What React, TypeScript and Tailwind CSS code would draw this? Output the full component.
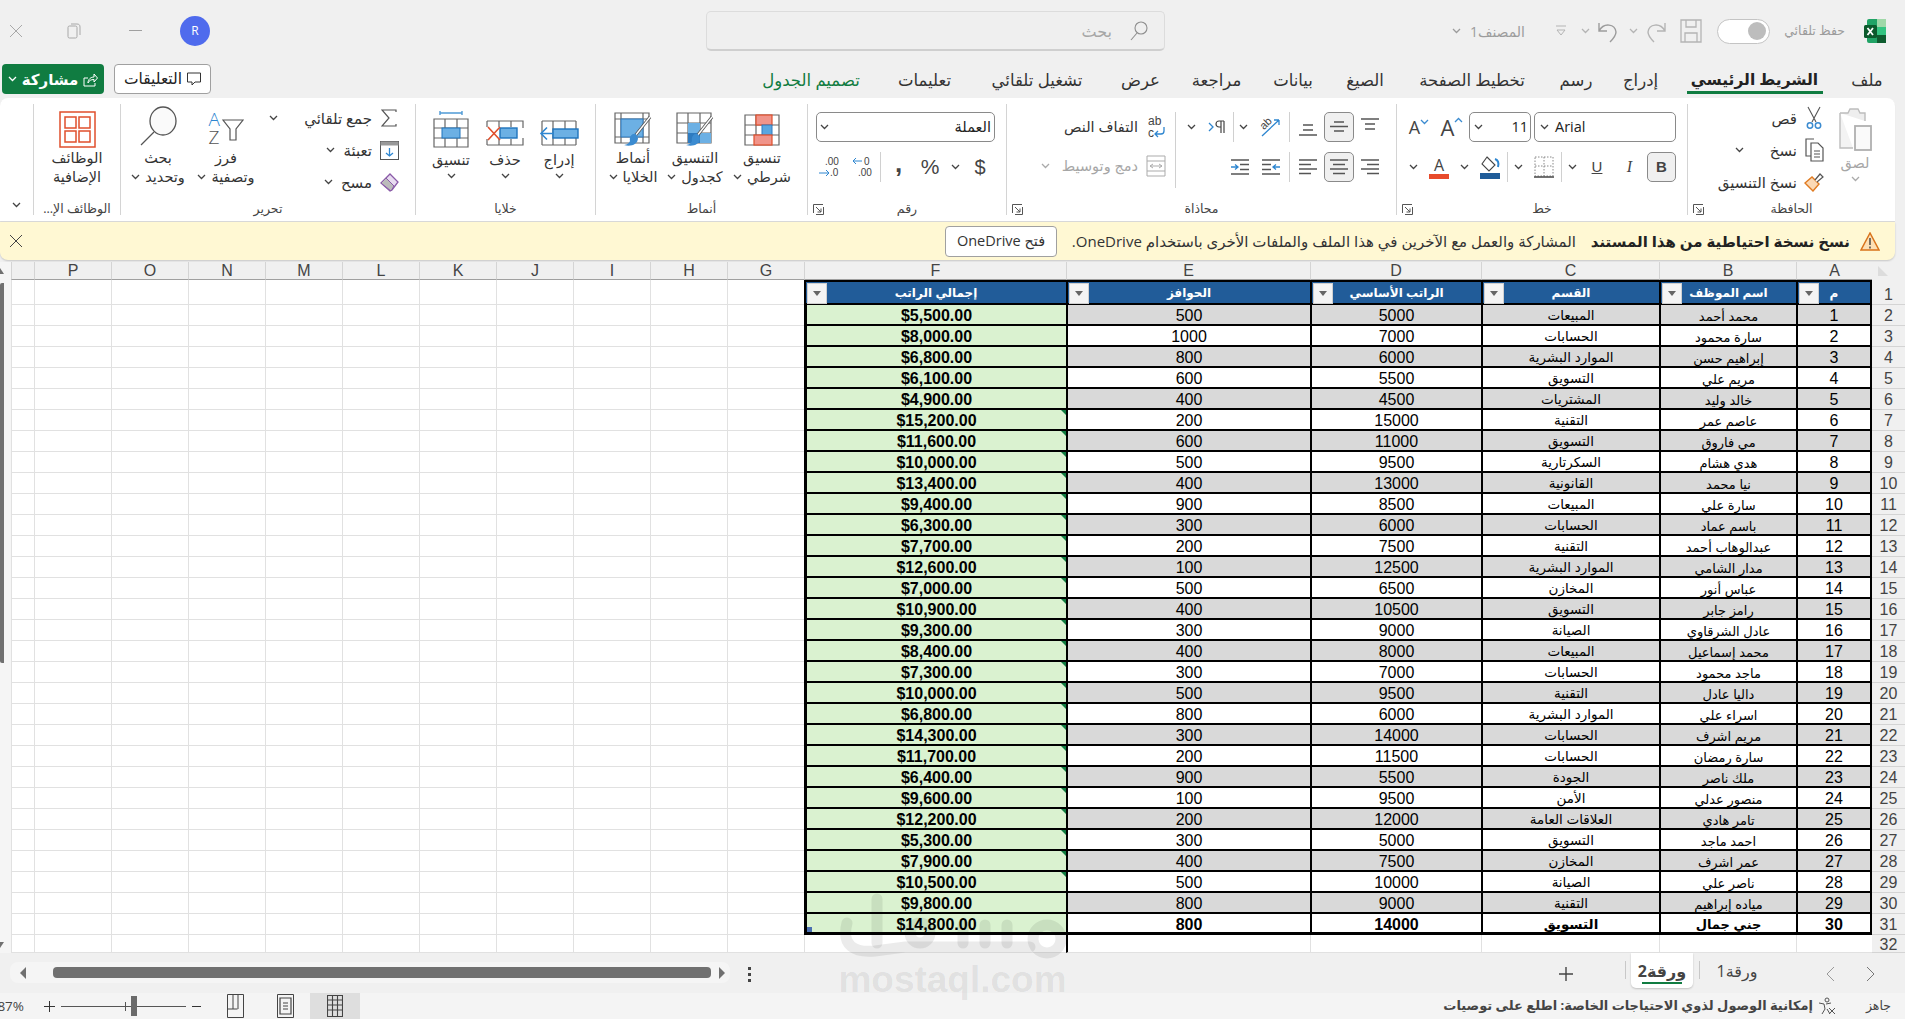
import type { ReactNode } from "react";

const GREEN = "#107C41";

// employee rows: name, department, base salary, bonus
const employees: [string, string, number, number][] = [
  ["محمد أحمد", "المبيعات", 5000, 500],
  ["سارة محمود", "الحسابات", 7000, 1000],
  ["إبراهيم حسن", "الموارد البشرية", 6000, 800],
  ["مريم علي", "التسويق", 5500, 600],
  ["خالد وليد", "المشتريات", 4500, 400],
  ["عاصم عمر", "التقنية", 15000, 200],
  ["مي فاروق", "التسويق", 11000, 600],
  ["هدي هشام", "السكرتارية", 9500, 500],
  ["نيا محمد", "القانونية", 13000, 400],
  ["سارة علي", "المبيعات", 8500, 900],
  ["باسم عماد", "الحسابات", 6000, 300],
  ["عبدالوهاب أحمد", "التقنية", 7500, 200],
  ["مدار الشامي", "الموارد البشرية", 12500, 100],
  ["عباس أنور", "المخازن", 6500, 500],
  ["رامز جابر", "التسويق", 10500, 400],
  ["عادل الشرقاوي", "الصيانة", 9000, 300],
  ["محمد إسماعيل", "المبيعات", 8000, 400],
  ["ماجد محمود", "الحسابات", 7000, 300],
  ["داليا عادل", "التقنية", 9500, 500],
  ["اسراء علي", "الموارد البشرية", 6000, 800],
  ["مريم اشرف", "الحسابات", 14000, 300],
  ["سارة رمضان", "الحسابات", 11500, 200],
  ["ملك ناصر", "الجودة", 5500, 900],
  ["منصور عدلي", "الأمن", 9500, 100],
  ["تامر هادي", "العلاقات العامة", 12000, 200],
  ["احمد ماجد", "التسويق", 5000, 300],
  ["عمر اشرف", "المخازن", 7500, 400],
  ["ناصر علي", "الصيانة", 10000, 500],
  ["مياده إبراهيم", "التقنية", 9000, 800],
  ["جني جمال", "التسويق", 14000, 800],
];

const tabs: [string, string][] = [
  ["ملف", "w-[60px]"],
  ["الشريط الرئيسي", "w-[165px]"],
  ["إدراج", "w-[63px]"],
  ["رسم", "w-[66px]"],
  ["تخطيط الصفحة", "w-[142px]"],
  ["الصيغ", "w-[72px]"],
  ["بيانات", "w-[72px]"],
  ["مراجعة", "w-[81px]"],
  ["عرض", "w-[71px]"],
  ["تشغيل تلقائي", "w-[136px]"],
  ["تعليمات", "w-[89px]"],
  ["تصميم الجدول", "w-[138px]"],
];

const emptyCols = ["G", "H", "I", "J", "K", "L", "M", "N", "O", "P", ""];

function Chev({ color = "#444", up = false }: { color?: string; up?: boolean }) {
  return (
    <svg width="9" height="6" viewBox="0 0 9 6" fill="none" className="shrink-0">
      <path d={up ? "M1 5l3.5-3.5L8 5" : "M1 1l3.5 3.5L8 1"} stroke={color} strokeWidth="1.3" />
    </svg>
  );
}

// fixed-width holder for ribbon glyphs, so they sit on the ribbon's own columns
function Slot({ className = "", children }: { className?: string; children?: ReactNode }) {
  return <div className={`flex items-center justify-center shrink-0 h-[30px] ${className}`}>{children}</div>;
}

function Sep({ className = "h-[30px]" }: { className?: string }) {
  return <div className={`w-[3px] shrink-0 flex justify-center ${className}`}><div className="w-px h-full bg-[#d0d0d0]" /></div>;
}

function Launcher() {
  return (
    <svg width="11" height="11" viewBox="0 0 11 11" fill="none" className="absolute left-[5px] top-[6px]" stroke="#555">
      <path d="M.5 9V.5H10M10.5 3v7.5H3" />
      <path d="M3 3l5 5M8 4.5V8H4.5" />
    </svg>
  );
}

function Group({
  width,
  label,
  launcher = false,
  children,
}: {
  width: string;
  label: string;
  launcher?: boolean;
  children: ReactNode;
}) {
  return (
    <div className={`${width} shrink-0 mt-[6px] h-[111px] border-e border-[#d4d4d4] flex flex-col`}>
      <div className="h-[94px] flex">{children}</div>
      <div className="relative h-[17px] leading-[22px] text-[12.5px] text-center text-[#444]">
        {label}
        {launcher && <Launcher />}
      </div>
    </div>
  );
}

function BigButton({
  width,
  icon,
  lines,
  chevInline = true,
}: {
  width: string;
  icon: ReactNode;
  lines: string[];
  chevInline?: boolean;
}) {
  return (
    <div className={`${width} shrink-0 flex flex-col items-center pt-[7px]`}>
      <div className="h-[37px] flex items-center justify-center">{icon}</div>
      {lines.map((l, i) => (
        <div key={l} className="h-[19px] leading-[19px] text-[14.5px] text-[#333] whitespace-nowrap flex items-center gap-[5px]">
          {l}
          {chevInline && i === lines.length - 1 && <Chev />}
        </div>
      ))}
    </div>
  );
}

function SmallRow({ icon, text, gray = false }: { icon: ReactNode; text: string; gray?: boolean }) {
  return (
    <div className={`flex items-center h-[32px] text-[15px] whitespace-nowrap ${gray ? "text-[#a6a6a6]" : "text-[#333]"}`}>
      <div className="w-[20px] flex justify-center shrink-0">{icon}</div>
      <span className="ms-[7px]">{text}</span>
    </div>
  );
}

// ---- icons ----

function ExcelLogo() {
  return (
    <svg width="24" height="26" viewBox="0 0 24 26">
      <rect x="4" y="1" width="19" height="24" rx="2" fill="#21a366" />
      <rect x="14" y="1" width="9" height="8" fill="#9fd8a8" />
      <rect x="4" y="9" width="10" height="8" fill="#107c41" />
      <rect x="14" y="9" width="9" height="8" fill="#33c481" />
      <rect x="14" y="17" width="9" height="8" fill="#0e5c2f" />
      <rect x="1" y="7" width="13" height="13" rx="1.5" fill="#0b5a2c" />
      <path d="M4.5 10l5.5 7M10 10l-5.5 7" stroke="#fff" strokeWidth="1.8" />
    </svg>
  );
}

function PasteIcon() {
  return (
    <svg width="36" height="46" viewBox="0 0 36 46" fill="none" stroke="#bdbdbd" strokeWidth="1.4">
      <path d="M3 6h8l2-4h8l2 4h5v8" fill="#eee" />
      <path d="M3 6v35h13" fill="#f3f3f3" />
      <rect x="18" y="19" width="16" height="24" fill="#fafafa" stroke="#b0b0b0" strokeWidth="1.8" />
    </svg>
  );
}

function ScissorsIcon() {
  return (
    <svg width="16" height="24" viewBox="0 0 16 24" fill="none" stroke="#555" strokeWidth="1.1">
      <path d="M2 1l8 15M14 1L6 16" />
      <circle cx="4" cy="19.5" r="2.7" stroke="#3b8bd0" strokeWidth="1.5" />
      <circle cx="12" cy="19.5" r="2.7" stroke="#3b8bd0" strokeWidth="1.5" />
    </svg>
  );
}

function CopyIcon() {
  return (
    <svg width="20" height="24" viewBox="0 0 20 24" fill="none" stroke="#555" strokeWidth="1.2">
      <path d="M10 1H2v17h5" />
      <path d="M7 5h7l5 5v13H7z" fill="#fff" />
      <path d="M10 13h6M10 16h6M10 19h6" />
    </svg>
  );
}

function BrushIcon() {
  return (
    <svg width="20" height="20" viewBox="0 0 20 20" fill="none">
      <path d="M1 11l7-6 7 7-6 7z" fill="#fbd9b5" stroke="#e07b22" strokeWidth="1.4" />
      <path d="M11 8l5-6 3 3-6 5" fill="#fff" stroke="#555" strokeWidth="1.2" />
    </svg>
  );
}

function FontA({ big, chev }: { big: boolean; chev: "up" | "down" }) {
  return (
    <div className="flex items-start" dir="ltr">
      <span className={`font-['Open_Sans',sans-serif] text-[#444] leading-none ${big ? "text-[22px]" : "text-[18px]"}`}>A</span>
      <span className="mt-[1px]"><Chev color="#3b8bd0" up={chev === "up"} /></span>
    </div>
  );
}

function AlignLines({ kind }: { kind: "right" | "center" | "left" | "top" | "middle" | "bottom" }) {
  const props = { stroke: "#555", strokeWidth: 1.3 };
  const sets: Record<string, string> = {
    right: "M0 3h18M6 7.5h12M0 12h18M6 16.5h12",
    center: "M0 3h18M3 7.5h12M0 12h18M3 16.5h12",
    left: "M0 3h18M0 7.5h12M0 12h18M0 16.5h12",
    top: "M0 2h18M4 7h10M4 12h10",
    middle: "M0 9.5h18M4 5h10M4 14h10",
    bottom: "M0 18h18M4 8h10M4 13h10",
  };
  return (
    <svg width="18" height="20" viewBox="0 0 18 20" fill="none">
      <path d={sets[kind]} {...props} />
    </svg>
  );
}

function Indent({ flip = false }: { flip?: boolean }) {
  return (
    <svg width="18" height="20" viewBox="0 0 18 20" fill="none" className={flip ? "-scale-x-100" : ""}>
      <path d="M0 3h18M0 17h18M9 7.5h9M9 12.5h9" stroke="#555" strokeWidth="1.3" />
      <path d="M0 10h6M4 7.5L7 10l-3 2.5" stroke="#2e86d0" strokeWidth="1.3" />
    </svg>
  );
}

function FilterArrow() {
  return (
    <div className="absolute left-[1px] top-[1px] w-[20px] h-[21px] bg-[#f4f4f4] border border-[#d0d0d0] flex items-center justify-center">
      <div className="w-0 h-0 border-x-[4px] border-x-transparent border-t-[5px] border-t-[#666]" />
    </div>
  );
}

function CondFormatIcon() {
  return (
    <svg width="36" height="32" viewBox="0 0 36 32" fill="none">
      <path d="M1 1h34v30H1zM1 11h34M1 21h34M12 1v30M24 1v30" stroke="#666" strokeWidth="1.2" />
      <rect x="12" y="1" width="16" height="10" fill="#f0948a" stroke="#e04f2c" strokeWidth="1.2" />
      <rect x="18" y="11" width="10" height="10" fill="#5aa6e0" stroke="#2e7bc0" />
      <rect x="10" y="21" width="18" height="10" fill="#f0948a" stroke="#e04f2c" strokeWidth="1.2" />
    </svg>
  );
}

function TableFormatIcon() {
  return (
    <svg width="38" height="36" viewBox="0 0 38 36" fill="none">
      <path d="M1 1h34v30H1zM1 11h34M1 21h34M12 1v30M24 1v30" stroke="#666" strokeWidth="1.2" />
      <rect x="12" y="11" width="12" height="10" fill="#6cb0e4" />
      <rect x="24" y="21" width="11" height="10" fill="#6cb0e4" />
      <rect x="12" y="21" width="12" height="10" fill="#2e7bc0" />
      <path d="M36 5L21 24" stroke="#555" strokeWidth="3" />
      <path d="M36 5L21 24" stroke="#fff" strokeWidth="1.4" />
      <path d="M22 22c-4-1-7 3-6 7-1 3-5 4-6 4 6 2 14 0 14-7z" fill="#3b8bd0" />
    </svg>
  );
}

function CellStyleIcon() {
  return (
    <svg width="38" height="36" viewBox="0 0 38 36" fill="none">
      <path d="M1 1h34v30H1zM1 7h34M1 25h34M7 1v30M29 1v30" stroke="#666" strokeWidth="1.2" />
      <rect x="7" y="7" width="22" height="18" fill="#6cb0e4" stroke="#2e7bc0" />
      <path d="M36 5L21 24" stroke="#555" strokeWidth="3" />
      <path d="M36 5L21 24" stroke="#fff" strokeWidth="1.4" />
      <path d="M22 22c-4-1-7 3-6 7-1 3-5 4-6 4 6 2 14 0 14-7z" fill="#3b8bd0" />
    </svg>
  );
}

function InsertIcon() {
  return (
    <svg width="40" height="30" viewBox="0 0 40 30" fill="none">
      <path d="M3 3h34M3 27h34M3 3v24M37 3v24M14 3v24M26 3v24" stroke="#666" strokeWidth="1.2" />
      <rect x="14" y="11" width="25" height="9" fill="#6cb0e4" stroke="#1f74bd" strokeWidth="1.4" />
      <path d="M15 15.5H2M8 9.5l-6 6 6 6" stroke="#2e86d0" strokeWidth="1.6" fill="#fff" />
    </svg>
  );
}

function DeleteIcon() {
  return (
    <svg width="38" height="30" viewBox="0 0 38 30" fill="none">
      <path d="M1 3h36v7M1 27h36v-7M1 3v6M1 21v6M13 3v6M13 21v6M25 3v6M25 21v6" stroke="#666" strokeWidth="1.2" />
      <rect x="14" y="10" width="17" height="10" fill="#6cb0e4" stroke="#1f74bd" strokeWidth="1.4" />
      <path d="M2 9l12 13M14 9L2 22" stroke="#e04f2c" strokeWidth="1.6" />
    </svg>
  );
}

function FormatCellIcon() {
  return (
    <svg width="36" height="38" viewBox="0 0 36 38" fill="none">
      <path d="M7 1v4M29 1v4M7 3h22" stroke="#4f9ad6" strokeWidth="1.4" />
      <path d="M1 9h34v28H1zM1 18h34M1 28h34M12 9v28M24 9v28" stroke="#666" strokeWidth="1.2" />
      <rect x="9" y="18" width="18" height="10" fill="#6cb0e4" stroke="#1f74bd" />
    </svg>
  );
}

function SortIcon() {
  return (
    <div className="flex items-start font-['Open_Sans',sans-serif]" dir="ltr">
      <div className="flex flex-col text-[19px] leading-[18px] w-[13px] mt-[4px] font-light">
        <span className="text-[#2e86d0] h-[18px]">A</span>
        <span className="text-[#555] h-[18px]">Z</span>
      </div>
      <svg width="22" height="30" viewBox="0 0 22 30" fill="none" className="mt-[13px]" stroke="#555" strokeWidth="1.2">
        <path d="M1 1h20l-7 9v11h-6v-11z" fill="#fff" />
      </svg>
    </div>
  );
}

function FindIcon() {
  return (
    <svg width="38" height="40" viewBox="0 0 38 40" fill="none" stroke="#555" strokeWidth="1.3">
      <ellipse cx="24" cy="15" rx="13" ry="14" fill="#fafafa" />
      <path d="M15 26L2 39" />
    </svg>
  );
}

function AddinsIcon() {
  return (
    <svg width="37" height="37" viewBox="0 0 37 37" fill="none" stroke="#e04f2c" strokeWidth="1.5">
      <rect x="1" y="1" width="35" height="35" fill="#fff" />
      <rect x="6" y="6" width="11" height="11" />
      <rect x="20" y="6" width="11" height="11" />
      <rect x="6" y="20" width="11" height="11" />
      <rect x="20" y="20" width="11" height="11" />
    </svg>
  );
}

// ---- page sections ----

function TitleBar() {
  return (
    <div className="flex h-[62px] items-center">
      <div className="w-[740px] shrink-0 flex items-center text-[#9c9c9c]">
        <div className="ms-[18px]"><ExcelLogo /></div>
        <span className="ms-[18px] w-[65px] text-[12.5px] whitespace-nowrap">حفظ تلقائي</span>
        <div className="ms-[10px] w-[53px] h-[25px] rounded-full border border-[#c4c4c4] bg-white flex items-center justify-start px-[3px]">
          <div className="w-[18px] h-[18px] rounded-full bg-[#bdbdbd]" />
        </div>
        <svg width="22" height="24" viewBox="0 0 22 24" fill="none" stroke="#b4b4b4" strokeWidth="1.3" className="ms-[15px]">
          <path d="M1 1h20v22H1zM6 1v7h10V1M5 23v-9h12v9" />
        </svg>
        <svg width="20" height="24" viewBox="0 0 20 24" fill="none" stroke="#b4b4b4" strokeWidth="1.4" className="ms-[14px]">
          <path d="M19 4v8h-8M19 12C14 3 3 5 2 13c0 4 3 7 6 10" />
        </svg>
        <div className="ms-[8px]"><Chev color="#b4b4b4" /></div>
        <svg width="20" height="24" viewBox="0 0 20 24" fill="none" stroke="#9c9c9c" strokeWidth="1.4" className="ms-[11px]">
          <path d="M1 4v8h8M1 12C6 3 17 5 18 13c0 4-3 7-6 10" />
        </svg>
        <div className="ms-[8px]"><Chev color="#b4b4b4" /></div>
        <svg width="12" height="12" viewBox="0 0 12 12" fill="none" stroke="#b4b4b4" className="ms-[14px]">
          <path d="M1 1h10M2 5h8L6 10z" />
        </svg>
        <span className="ms-[30px] w-[55px] text-[14px] whitespace-nowrap">المصنف1</span>
        <div className="ms-[9px]"><Chev color="#9c9c9c" /></div>
      </div>
      <div className="w-[459px] h-[40px] shrink-0 rounded-[5px] bg-[#efefef] border border-[#dcdcdc] border-b-2 border-b-[#cfcfcf] flex items-center text-[#a6a6a6]">
        <svg width="18" height="20" viewBox="0 0 18 20" fill="none" stroke="#8e8e8e" strokeWidth="1.1" className="ms-[16px]">
          <circle cx="11" cy="7" r="6" />
          <path d="M7 12l-6 7" />
        </svg>
        <span className="ms-[18px] text-[16px]">بحث</span>
      </div>
      <div className="flex-1 flex items-center justify-end text-[#a0a0a0]">
        <div className="w-[30px] h-[30px] rounded-full bg-[#4F6BED] text-white text-[12px] flex items-center justify-center font-['Open_Sans',sans-serif]">R</div>
        <div className="ms-[35px] w-[20px] h-[2px] flex justify-center"><div className="w-[13px] h-px bg-[#a0a0a0]" /></div>
        <svg width="14" height="16" viewBox="0 0 14 16" fill="none" stroke="#a8a8a8" className="ms-[44px]">
          <rect x="1" y="3" width="9" height="12" rx="1.5" />
          <path d="M4 1h6c2 0 3 1 3 3v8" />
        </svg>
        <svg width="14" height="14" viewBox="0 0 14 14" fill="none" stroke="#a8a8a8" className="ms-[44px] me-[9px]">
          <path d="M1 1l12 12M13 1L1 13" />
        </svg>
      </div>
    </div>
  );
}

function TabRow() {
  return (
    <div className="flex h-[36px] items-stretch">
      <div className="ms-[8px] flex">
        {tabs.map(([t, w], i) => (
          <div
            key={t}
            className={`${w} relative flex items-center justify-center whitespace-nowrap ${
              i === 1 ? "text-[15.5px] font-bold text-[#222]" : i === 11 ? "text-[16.5px] text-[#107C41]" : "text-[16.5px] text-[#333]"
            }`}
          >
            {t}
            {i === 1 && <div className="absolute bottom-[4px] left-[15px] w-[136px] h-[3px] bg-[#107C41]" />}
          </div>
        ))}
      </div>
      <div className="flex-1 flex items-start justify-end pt-[2px] gap-[10px] me-[2px]">
        <div className="w-[97px] h-[30px] rounded-[4px] bg-white border border-[#a0a0a0] flex items-center justify-center gap-[5px] text-[15.5px] text-[#222]">
          <svg width="14" height="14" viewBox="0 0 14 14" fill="none" stroke="#333">
            <path d="M.5 1h13v9H8l-3 3v-3H.5z" />
          </svg>
          التعليقات
        </div>
        <div style={{ backgroundColor: GREEN }} className="w-[102px] h-[30px] rounded-[4px] flex items-center justify-center gap-[5px] text-[15px] font-bold text-white">
          <svg width="15" height="15" viewBox="0 0 15 15" fill="none" stroke="#fff">
            <path d="M5 6H1v8h11v-3M5 11c0-4 3-6 6-6V2l3.5 4L11 10V7.5c-3 0-5 1-6 3.5z" />
          </svg>
          مشاركة
          <Chev color="#fff" />
        </div>
      </div>
    </div>
  );
}

function Ribbon() {
  return (
    <div className="ms-[10px] h-[123px] bg-white rounded-t-[8px] flex shadow-[0_1px_1px_rgba(0,0,0,0.1)]">
      {/* clipboard */}
      <Group width="w-[208px]" label="الحافظة" launcher>
        <div className="ms-[15px] w-[50px] flex flex-col items-center text-[#a6a6a6] text-[14.5px]">
          <div className="mt-[3px]"><PasteIcon /></div>
          <span className="mt-[1px] leading-[18px]">لصق</span>
          <div className="mt-[4px]"><Chev color="#aaa" /></div>
        </div>
        <div className="-mt-[2px] ms-[6px]">
          <SmallRow icon={<ScissorsIcon />} text="قص" />
          <div className="flex items-center">
            <SmallRow icon={<CopyIcon />} text="نسخ" />
            <div className="ms-[26px]"><Chev /></div>
          </div>
          <SmallRow icon={<BrushIcon />} text="نسخ التنسيق" />
        </div>
      </Group>

      {/* font */}
      <Group width="w-[291px]" label="خط" launcher>
        <div className="ms-[11px] pt-[8px] flex flex-col gap-[10px]">
          <div className="flex h-[30px]">
            <div dir="ltr" className="w-[142px] ml-[3px] rounded-[5px] border border-[#8a8a8a] flex items-center ps-[2px]">
              <div className="w-[14px] flex justify-center"><Chev /></div>
              <span className="ms-[4px] text-[14.5px] font-['Open_Sans',sans-serif] text-[#222]">Arial</span>
            </div>
            <div dir="ltr" className="w-[62px] rounded-[5px] border border-[#8a8a8a] flex items-center px-[2px] justify-between">
              <div className="w-[12px] flex justify-center"><Chev /></div>
              <span className="text-[14.5px] font-['Open_Sans',sans-serif] text-[#222]">11</span>
            </div>
            <Slot className="w-[34px]"><FontA big chev="up" /></Slot>
            <Slot className="w-[32px]"><FontA big={false} chev="down" /></Slot>
          </div>
          <div className="flex h-[30px]">
            <Slot className="w-[29px] rounded-[5px] border border-[#8a8a8a] bg-[#f0f0f0] font-bold text-[15px] text-[#444] font-['Liberation_Sans',sans-serif]">B</Slot>
            <Slot className="w-[35px] italic text-[16px] text-[#444] font-['Liberation_Serif',serif]">I</Slot>
            <Slot className="w-[30px] underline text-[15px] text-[#444] font-['Liberation_Sans',sans-serif]">U</Slot>
            <Slot className="w-[19px]"><Chev /></Slot>
            <Sep />
            <Slot className="w-[32px]">
              <svg width="20" height="22" viewBox="0 0 20 22" fill="none">
                <path d="M1 1h18v19H1zM10 1v19M1 10h18" stroke="#888" strokeDasharray="1.5 1.5" />
                <path d="M0 21h20" stroke="#444" strokeWidth="1.5" />
              </svg>
            </Slot>
            <Slot className="w-[19px]"><Chev /></Slot>
            <Sep />
            <Slot className="w-[32px]">
              <svg width="21" height="24" viewBox="0 0 21 24" fill="none">
                <path d="M7 2l8 8-6 6-7-7z" fill="#fff" stroke="#444" strokeWidth="1.1" />
                <path d="M15 4c3 1 4 4 3 8" stroke="#2e86d0" strokeWidth="2" />
                <rect x="0" y="18" width="20" height="6" fill="#1F5C99" />
              </svg>
            </Slot>
            <Slot className="w-[20px]"><Chev /></Slot>
            <Slot className="w-[30px]">
              <div className="flex flex-col items-center">
                <span className="font-['Open_Sans',sans-serif] text-[16px] leading-[18px] text-[#444]">A</span>
                <div className="w-[20px] h-[5px] bg-[#E84B2C]" />
              </div>
            </Slot>
            <Slot className="w-[21px]"><Chev /></Slot>
          </div>
        </div>
      </Group>

      {/* alignment */}
      <Group width="w-[390px]" label="محاذاة" launcher>
        <div className="ms-[10px] pt-[8px] w-[209px] flex flex-col gap-[10px]">
          <div className="flex">
            <Slot className="w-[32px]"><AlignLines kind="top" /></Slot>
            <Slot className="w-[30px] rounded-[5px] border border-[#8a8a8a] bg-[#f0f0f0]"><AlignLines kind="middle" /></Slot>
            <Slot className="w-[33px]"><AlignLines kind="bottom" /></Slot>
            <Sep />
            <Slot className="w-[36px]">
              <svg width="24" height="24" viewBox="0 0 24 24" fill="none" direction="ltr">
                <path d="M4 21L21 5M21 5h-5M21 5v5" stroke="#2e86d0" strokeWidth="1.3" />
                <text x="2" y="12" fontSize="11" fill="#444" transform="rotate(-45 8 9)" fontFamily="Liberation Sans">ab</text>
              </svg>
            </Slot>
            <Slot className="w-[17px]"><Chev /></Slot>
            <Sep />
            <Slot className="w-[31px]">
              <svg width="18" height="14" viewBox="0 0 18 14" fill="none" direction="ltr">
                <path d="M1 3l4 4-4 4" stroke="#2e86d0" strokeWidth="1.3" />
                <path d="M13 1v12M16 1v12M16 1h-5a3 3 0 0 0 0 6h2" stroke="#444" strokeWidth="1.2" />
              </svg>
            </Slot>
            <Slot className="w-[20px]"><Chev /></Slot>
          </div>
          <div className="flex">
            <Slot className="w-[32px]"><AlignLines kind="right" /></Slot>
            <Slot className="w-[30px] rounded-[5px] border border-[#8a8a8a] bg-[#f0f0f0]"><AlignLines kind="center" /></Slot>
            <Slot className="w-[33px]"><AlignLines kind="left" /></Slot>
            <Sep />
            <Slot className="w-[35px]"><Indent flip /></Slot>
            <Slot className="w-[26px]"><Indent /></Slot>
          </div>
        </div>
        <Sep className="h-[76px] mt-[8px]" />
        <div className="ms-[8px] pt-[8px]">
          <div className="mb-[7px]">
            <div className="flex items-center h-[30px] text-[14.5px] text-[#333] whitespace-nowrap">
              <svg width="20" height="26" viewBox="0 0 20 26" fill="none" direction="ltr">
                <text x="2" y="11" fontSize="12" fill="#444" fontFamily="Liberation Sans">ab</text>
                <text x="2" y="23" fontSize="12" fill="#444" fontFamily="Liberation Sans">c</text>
                <path d="M18 13v4c0 2-1 3-3 3H9M12 17l-3 3 3 3" stroke="#2e86d0" strokeWidth="1.3" />
              </svg>
              <span className="ms-[8px]">التفاف النص</span>
            </div>
          </div>
          <div className="flex items-center h-[34px] text-[14.5px] text-[#a6a6a6] whitespace-nowrap">
            <svg width="20" height="22" viewBox="0 0 20 22" fill="none" stroke="#ababab">
              <path d="M1 1h18v20H1zM1 6h18M1 16h18" />
              <path d="M4 11h12M7 9l-3 2 3 2M13 9l3 2-3 2" />
            </svg>
            <span className="ms-[8px]">دمج وتوسيط</span>
            <div className="ms-[12px]"><Chev color="#aaa" /></div>
          </div>
        </div>
      </Group>

      {/* number */}
      <Group width="w-[199px]" label="رقم" launcher>
        <div className="ms-[11px] pt-[8px] flex flex-col gap-[10px]">
          <div className="w-[179px] h-[30px] rounded-[5px] border border-[#8a8a8a] flex items-center justify-between px-[3px] text-[14.5px] text-[#222]">
            العملة
            <Chev />
          </div>
          <div className="flex text-[#444] font-['Liberation_Sans',sans-serif]">
            <Slot className="w-[30px] text-[20px]">$</Slot>
            <Slot className="w-[20px]"><Chev /></Slot>
            <Slot className="w-[30px] text-[21px]">%</Slot>
            <Slot className="w-[33px] text-[26px] font-bold pb-[8px]">,</Slot>
            <Sep />
            <Slot className="w-[32px]">
              <svg width="22" height="24" viewBox="0 0 22 24" fill="none" direction="ltr">
                <text x="12" y="10" fontSize="10" fill="#444" fontFamily="Liberation Sans">0</text>
                <text x="6" y="21" fontSize="10" fill="#444" fontFamily="Liberation Sans">.00</text>
                <path d="M10 6H1M4 3L1 6l3 3" stroke="#2e86d0" />
              </svg>
            </Slot>
            <Slot className="w-[34px]">
              <svg width="22" height="24" viewBox="0 0 22 24" fill="none" direction="ltr">
                <text x="6" y="10" fontSize="10" fill="#444" fontFamily="Liberation Sans">.00</text>
                <text x="11" y="21" fontSize="10" fill="#444" fontFamily="Liberation Sans">.0</text>
                <path d="M0 18h10M7 15l3 3-3 3" stroke="#2e86d0" />
              </svg>
            </Slot>
          </div>
        </div>
      </Group>

      {/* styles */}
      <Group width="w-[212px]" label="أنماط">
        <div className="ms-[13px] flex">
          <BigButton width="w-[64px]" icon={<CondFormatIcon />} lines={["تنسيق", "شرطي"]} />
          <BigButton width="w-[70px]" icon={<TableFormatIcon />} lines={["التنسيق", "كجدول"]} />
          <BigButton width="w-[54px]" icon={<CellStyleIcon />} lines={["أنماط", "الخلايا"]} />
        </div>
      </Group>

      {/* cells */}
      <Group width="w-[180px]" label="خلايا">
        <div className="ms-[9px] flex">
          <BigCell icon={<InsertIcon />} text="إدراج" />
          <BigCell icon={<DeleteIcon />} text="حذف" />
          <BigCell icon={<FormatCellIcon />} text="تنسيق" />
        </div>
      </Group>

      {/* editing */}
      <Group width="w-[295px]" label="تحرير">
        <div className="ms-[16px] w-[130px] -mt-[2px] shrink-0">
          <div className="flex items-center justify-between">
            <SmallRow
              icon={
                <svg width="16" height="18" viewBox="0 0 16 18" fill="none" stroke="#555" strokeWidth="1.2">
                  <path d="M15 3V1H1l7 8-7 8h14v-2" />
                </svg>
              }
              text="جمع تلقائي"
            />
            <Chev />
          </div>
          <div className="flex items-center">
            <SmallRow
              icon={
                <svg width="19" height="19" viewBox="0 0 19 19" fill="none">
                  <rect x=".5" y=".5" width="18" height="18" stroke="#555" fill="#fff" />
                  <rect x=".5" y=".5" width="18" height="4" fill="#999" />
                  <path d="M9.5 7v8M6 12l3.5 3 3.5-3" stroke="#2e86d0" strokeWidth="1.3" />
                </svg>
              }
              text="تعبئة"
            />
            <div className="ms-[8px]"><Chev /></div>
          </div>
          <div className="flex items-center">
            <SmallRow
              icon={
                <svg width="19" height="19" viewBox="0 0 19 19" fill="none">
                  <path d="M10 1l8 8-6 8-2 1-9-8z" fill="#e8dcf0" stroke="#8a5aa8" strokeWidth="1.3" />
                  <path d="M1 10l5-5 8 8-3 5z" fill="#bbb" stroke="#8a5aa8" />
                </svg>
              }
              text="مسح"
            />
            <div className="ms-[8px]"><Chev /></div>
          </div>
        </div>
        <div className="w-[72px] ms-[7px] shrink-0 flex flex-col items-center pt-[2px]">
          <div className="h-[42px]"><SortIcon /></div>
          <div className="h-[19px] leading-[19px] text-[14.5px] text-[#333]">فرز</div>
          <div className="h-[19px] leading-[19px] text-[14.5px] text-[#333] flex items-center gap-[5px] whitespace-nowrap">وتصفية<Chev /></div>
        </div>
        <div className="w-[64px] shrink-0 flex flex-col items-center pt-[2px]">
          <div className="h-[42px]"><FindIcon /></div>
          <div className="h-[19px] leading-[19px] text-[14.5px] text-[#333]">بحث</div>
          <div className="h-[19px] leading-[19px] text-[14.5px] text-[#333] flex items-center gap-[5px] whitespace-nowrap">وتحديد<Chev /></div>
        </div>
      </Group>

      {/* add-ins */}
      <Group width="w-[87px]" label="الوظائف الإ...">
        <BigButton width="w-full" icon={<AddinsIcon />} lines={["الوظائف", "الإضافية"]} chevInline={false} />
      </Group>

      <div className="flex-1 flex items-end justify-center pb-[13px]"><Chev /></div>
    </div>
  );
}

function BigCell({ icon, text }: { icon: ReactNode; text: string }) {
  return (
    <div className="w-[54px] shrink-0 flex flex-col items-center pt-[3px]">
      <div className="h-[41px] flex items-end">{icon}</div>
      <span className="h-[23px] leading-[23px] text-[14.5px] text-[#333]">{text}</span>
      <div className="mt-[2px]"><Chev /></div>
    </div>
  );
}

function BackupBar() {
  return (
    <div className="ms-[10px] mt-px h-[38px] bg-[#FFF8D3] rounded-b-[8px] flex items-center shadow-[0_1px_2px_rgba(0,0,0,0.18)]">
      <svg width="20" height="19" viewBox="0 0 20 19" className="ms-[15px] shrink-0">
        <path d="M10 1L1 18h18z" fill="#fde0b4" stroke="#d9731a" strokeWidth="1.5" />
        <path d="M10 6v7M10 14.5v2" stroke="#333" strokeWidth="1.3" />
      </svg>
      <span className="ms-[10px] w-[259px] text-[15px] font-bold text-[#222] whitespace-nowrap">نسخ نسخة احتياطية من هذا المستند</span>
      <span className="ms-[15px] w-[505px] text-[15px] text-[#333] whitespace-nowrap">المشاركة والعمل مع الآخرين في هذا الملف والملفات الأخرى باستخدام OneDrive.</span>
      <div className="ms-[14px] w-[112px] h-[31px] bg-white rounded-[4px] border border-[#a0a0a0] flex items-center justify-center text-[14.5px] text-[#333]">فتح OneDrive</div>
      <div className="flex-1 flex justify-end me-[9px]">
        <svg width="14" height="14" viewBox="0 0 14 14" fill="none" stroke="#444">
          <path d="M1 1l12 12M13 1L1 13" />
        </svg>
      </div>
    </div>
  );
}

function Head({ label }: { label: string }) {
  return (
    <div className="relative h-full bg-[#215C99] border-y-2 border-e-2 border-black flex items-center justify-center text-[12px] font-bold text-white whitespace-nowrap">
      {label}
      <FilterArrow />
    </div>
  );
}

function Sheet() {
  const body = "pt-[3px] border-b-2 border-e-2 border-black flex items-center justify-center whitespace-nowrap";
  return (
    <div className="flex h-[691px] mt-[2px]">
      <div
        dir="rtl"
        className="grid grid-cols-[33px_76px_137px_178px_171px_244px_262px_repeat(10,77px)_23px] grid-rows-[18px_25px_repeat(30,21px)_18px] bg-white overflow-hidden text-black text-[16px] leading-none font-['Liberation_Sans','DejaVu_Sans',sans-serif]"
      >
        {/* column letters */}
        <div className="bg-[#f0f0f0] flex items-center justify-center ps-[12px]">
          <div className="w-0 h-0 border-t-[10px] border-l-[10px] border-t-transparent border-l-[#dcdcdc]" />
        </div>
        {["A", "B", "C", "D", "E", "F", ...emptyCols].map((c, i) => (
          <div key={i} className="bg-[#f0f0f0] border-e border-[#d4d4d4] border-b border-b-[#a0a0a0] flex items-center justify-center text-[#444]">{c}</div>
        ))}

        {/* table header */}
        <RowLabel n={1} />
        <div className="relative h-full bg-[#215C99] border-y-2 border-e-2 border-s-2 border-black flex items-center justify-center text-[12px] font-bold text-white">م<FilterArrow /></div>
        <Head label="اسم الموظف" />
        <Head label="القسم" />
        <Head label="الراتب الأساسي" />
        <Head label="الحوافز" />
        <Head label="إجمالي الراتب" />
        {emptyCols.map((_, i) => <Blank key={i} />)}

        {employees.map(([name, dept, base, bonus], i) => {
          const last = i === employees.length - 1;
          const fill = i % 2 === 0 ? "bg-[#D9D9D9]" : "bg-white";
          const bottom = last ? "border-b-[3px] font-bold" : "";
          return [
            <RowLabel key={`r${i}`} n={i + 2} />,
            <div key={`a${i}`} className={`${body} ${fill} ${bottom} border-s-2`}>{i + 1}</div>,
            <div key={`b${i}`} className={`${body} ${fill} ${bottom} text-[13px]`}>{name}</div>,
            <div key={`c${i}`} className={`${body} ${fill} ${bottom} text-[13.5px]`}>{dept}</div>,
            <div key={`d${i}`} className={`${body} ${fill} ${bottom}`}>{base}</div>,
            <div key={`e${i}`} className={`${body} ${fill} ${bottom}`}>{bonus}</div>,
            <div
              key={`f${i}`}
              dir="ltr"
              className={`relative pt-[3px] flex items-center justify-center whitespace-nowrap bg-[#DAF2D0] font-bold border-black border-l-[3px] ${last ? "border-b-[3px]" : "border-b-2"}`}
            >
              ${(base + bonus).toLocaleString("en-US", { minimumFractionDigits: 2 })}
              {i >= 5 && i <= 27 && (
                <div className="absolute top-0 right-0 w-0 h-0 border-t-[5px] border-l-[5px] border-t-[#107C41] border-l-transparent" />
              )}
              {last && <div className="absolute bottom-0 left-0 w-[5px] h-[5px] bg-[#4a6fb0]" />}
            </div>,
            ...emptyCols.map((_, j) => <Blank key={`x${i}-${j}`} />),
          ];
        })}

        {/* row 32 */}
        <RowLabel n={32} />
        <Blank />
        <Blank />
        <Blank />
        <Blank />
        <div className="border-e-2 border-black border-b border-b-[#e1e1e1]" />
        <Blank />
        {emptyCols.map((_, i) => <Blank key={i} />)}
      </div>

      {/* vertical scrollbar */}
      <div className="w-[11px] shrink-0 bg-[#f5f5f5] flex flex-col">
        <div className="self-end mt-[6px] w-0 h-0 border-b-[6px] border-b-[#707070] border-s-[4px] border-s-transparent" />
        <div className="self-end h-[380px] w-[4px] mt-[9px] bg-[#707070] rounded-e-[2px]" />
        <div className="flex-1" />
        <div className="self-end mb-[5px] w-0 h-0 border-t-[6px] border-t-[#707070] border-s-[4px] border-s-transparent" />
      </div>
    </div>
  );
}

function RowLabel({ n }: { n: number }) {
  return (
    <div className={`bg-[#f0f0f0] border-b border-[#d4d4d4] flex items-center justify-center text-[#444] ${n === 1 ? "pt-[5px]" : "pt-[2px]"}`}>
      {n}
    </div>
  );
}

function Blank() {
  return <div className="border-e border-b border-[#e1e1e1]" />;
}

function SheetTabs() {
  return (
    <div className="flex h-[40px] items-start text-[#444]">
      <svg width="10" height="16" viewBox="0 0 10 16" fill="none" stroke="#777" className="ms-[29px] mt-[13px]">
        <path d="M1 1l7 7-7 7" />
      </svg>
      <svg width="10" height="16" viewBox="0 0 10 16" fill="none" stroke="#999" className="ms-[31px] mt-[13px]">
        <path d="M9 1L2 8l7 7" />
      </svg>
      <div className="ms-[56px] w-[64px] h-[35px] flex items-center justify-center text-[16px]">ورقة1</div>
      <div className="ms-[5px] mt-[8px] w-px h-[18px] bg-[#c8c8c8]" />
      <div className="ms-[6px] w-[62px] h-[35px] relative bg-white rounded-b-[5px] flex items-center justify-center text-[16px] font-bold shadow-[0_1px_2px_rgba(0,0,0,0.2)]">
        ورقة2
        <div className="absolute bottom-[4px] inset-x-[11px] h-[2px] bg-[#107C41]" />
      </div>
      <div className="ms-[5px] mt-[8px] w-px h-[18px] bg-[#c8c8c8]" />
      <svg width="14" height="14" viewBox="0 0 14 14" fill="none" stroke="#444" strokeWidth="1.4" className="ms-[52px] mt-[14px]">
        <path d="M7 0v14M0 7h14" />
      </svg>
      <div className="flex-1" />
      <div className="mt-[14px] w-[3px] flex flex-col gap-[3px]">
        <div className="h-[3px] bg-[#444]" />
        <div className="h-[3px] bg-[#444]" />
        <div className="h-[3px] bg-[#444]" />
      </div>
      <div className="ms-[18px] me-[10px] mt-[9px] w-[720px] h-[21px] rounded-[8px] bg-[#f5f5f5] flex items-center px-[5px]">
        <div className="w-0 h-0 border-y-[6px] border-y-transparent border-e-[6px] border-e-[#707070]" />
        <div className="ms-[8px] w-[658px] h-[11px] rounded-[4px] bg-[#707070]" />
        <div className="flex-1" />
        <div className="me-[5px] w-0 h-0 border-y-[6px] border-y-transparent border-s-[6px] border-s-[#707070]" />
      </div>
    </div>
  );
}

function StatusBar() {
  return (
    <div className="flex h-[26px] items-center bg-[#f4f4f4] text-[#444]">
      <span className="ms-[14px] w-[27px] text-[12.5px] whitespace-nowrap">جاهز</span>
      <svg width="18" height="18" viewBox="0 0 18 18" fill="none" stroke="#555" className="ms-[28px]">
        <circle cx="9" cy="3" r="2" />
        <path d="M1 6l5 1 1 5-3 5M13 6l-5 1M9 12l3 5M11 11l6 6M17 11l-6 6" />
      </svg>
      <span className="ms-[5px] text-[13px] font-bold whitespace-nowrap">إمكانية الوصول لذوي الاحتياجات الخاصة: اطلع على توصيات</span>
      <div className="flex-1" />
      <div className="w-[50px] h-full bg-[#dedede] flex items-center justify-center">
        <svg width="16" height="22" viewBox="0 0 16 22" fill="none" stroke="#444" strokeWidth="1.1">
          <path d="M.5.5h15v21H.5zM.5 5h15M.5 10h15M.5 15h15M5.5.5v21M10.5.5v21" />
        </svg>
      </div>
      <div className="w-[50px] flex justify-center">
        <svg width="17" height="24" viewBox="0 0 17 24" fill="none" stroke="#444">
          <path d="M.5.5h16v23H.5z" />
          <path d="M3 4h11v16H3zM6 9h5M6 12h5M6 15h5" strokeWidth="1.2" />
        </svg>
      </div>
      <div className="w-[50px] flex justify-center">
        <svg width="17" height="24" viewBox="0 0 17 24" fill="none" stroke="#444">
          <path d="M.5.5h16v23H.5zM.5 15h10M11 15V.5M6 .5V15" />
        </svg>
      </div>
      <div className="ms-[9px] w-[9px] h-px bg-[#333]" />
      <div className="ms-[6px] w-[125px] h-px bg-[#555] flex items-center">
        <div className="ms-[49px] w-[6px] h-[20px] bg-[#6a6a6a] shrink-0" />
        <div className="ms-[5px] w-px h-[9px] bg-[#555] shrink-0" />
      </div>
      <svg width="11" height="11" viewBox="0 0 11 11" fill="none" stroke="#333" className="ms-[6px]">
        <path d="M5.5 0v11M0 5.5h11" />
      </svg>
      <div className="ms-[20px] w-[24px] overflow-hidden flex justify-start">
        <span dir="ltr" className="text-[13.5px] font-['Open_Sans',sans-serif] whitespace-nowrap">87%</span>
      </div>
    </div>
  );
}

function Watermark() {
  return (
    <div className="absolute left-[835px] top-[891px] w-[235px] pointer-events-none flex flex-col items-center">
      <svg width="235" height="72" viewBox="0 0 235 72" fill="none" stroke="rgba(0,0,0,0.08)" strokeWidth="11" strokeLinecap="round">
        <path d="M12 32C6 55 20 62 40 60l30-4h125" />
        <path d="M42 8v44" />
        <circle cx="85" cy="42" r="10" />
        <path d="M128 34v18M150 34v18M172 34v18" />
        <circle cx="212" cy="48" r="14" />
      </svg>
      <div className="-mt-[2px] text-[37px] leading-[37px] font-bold text-[rgba(0,0,0,0.08)] font-['Liberation_Sans',sans-serif]" dir="ltr">mostaql.com</div>
    </div>
  );
}

export default function App() {
  return (
    <div dir="rtl" className="relative w-[1905px] h-[1019px] overflow-hidden bg-[#f0f0f0] font-['Open_Sans','DejaVu_Sans',sans-serif]">
      <TitleBar />
      <TabRow />
      <Ribbon />
      <BackupBar />
      <Sheet />
      <SheetTabs />
      <StatusBar />
      <Watermark />
    </div>
  );
}
